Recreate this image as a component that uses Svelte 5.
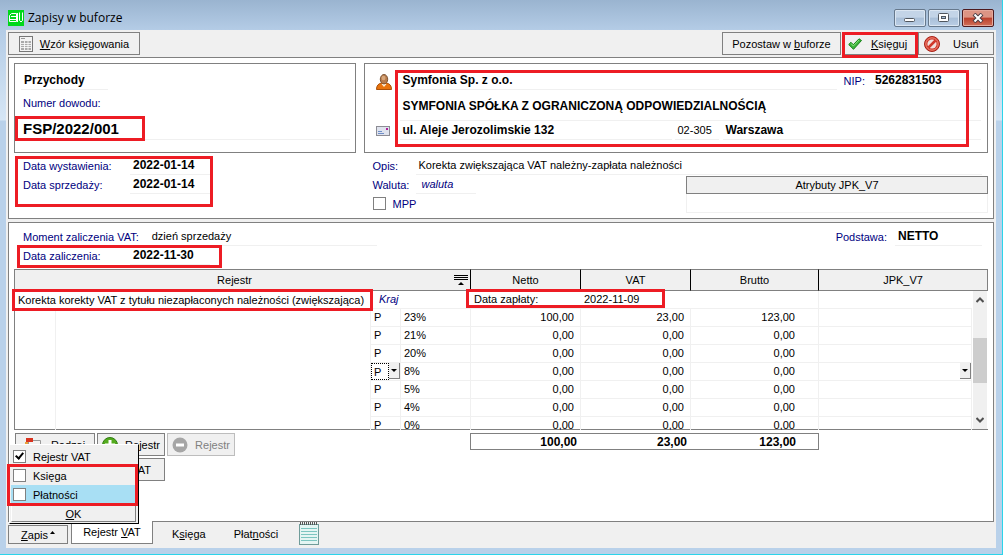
<script lang="ts">
    let menuItems = $state([
        { label: 'Rejestr VAT', checked: true, active: false },
        { label: 'Księga', checked: false, active: false },
        { label: 'Płatności', checked: false, active: true }
    ]);

    let mpp = $state(false);

    const rates = [
        { rate: '23%', netto: '100,00', vat: '23,00', brutto: '123,00' },
        { rate: '21%', netto: '0,00', vat: '0,00', brutto: '0,00' },
        { rate: '20%', netto: '0,00', vat: '0,00', brutto: '0,00' },
        { rate: '8%', netto: '0,00', vat: '0,00', brutto: '0,00', selected: true },
        { rate: '5%', netto: '0,00', vat: '0,00', brutto: '0,00' },
        { rate: '4%', netto: '0,00', vat: '0,00', brutto: '0,00' },
        { rate: '0%', netto: '0,00', vat: '0,00', brutto: '0,00' }
    ];
</script>

<svelte:head>
    <title>Zapisy w buforze</title>
</svelte:head>

<div class="window">
    <header class="titlebar">
        <svg class="logo" width="16" height="16" viewBox="0 0 16 16">
            <rect width="16" height="16" fill="#00d81a" />
            <path d="M3.500 3.500h5v8h-7v-6zM3 6.500h5M1.500 9.500h6.500M11.500 2.500v8l1.500 1.500 1.500-1.500v-8M9.500 3v9" fill="none" stroke="#fff" />
        </svg>
        <h1>Zapisy w buforze</h1>
        <div class="controls">
            <button class="control" aria-label="Minimalizuj">
                <svg width="12" height="10" viewBox="0 0 12 10"><rect x="0.500" y="5.500" width="10" height="3" rx="1" fill="#fff" stroke="#50565e" /></svg>
            </button>
            <button class="control" aria-label="Maksymalizuj">
                <svg width="12" height="10" viewBox="0 0 12 10">
                    <rect x="0.500" y="0.500" width="10" height="8" rx="1" fill="#fff" stroke="#50565e" />
                    <rect x="3.500" y="3.500" width="4" height="2" fill="#a9c0d9" stroke="#50565e" />
                </svg>
            </button>
            <button class="control close" aria-label="Zamknij">
                <svg width="12" height="10" viewBox="0 0 12 10">
                    <path d="M2 1l8 8M10 1l-8 8" stroke="#4b3d45" stroke-width="4" />
                    <path d="M2.500 1.500l7 7M9.500 1.500l-7 7" stroke="#fff" stroke-width="2" />
                </svg>
            </button>
        </div>
    </header>

    <main class="client">
        <div class="toolbar">
            <button class="btn pattern">
                <svg width="14" height="16" viewBox="0 0 14 16">
                    <rect x="0.500" y="0.500" width="13" height="15" fill="#f4f4f4" stroke="#777" />
                    <path d="M2 2.500h4" stroke="#999" />
                    <path d="M2 5h10v9H2z" fill="#aaa" />
                    <path d="M2 7.500h10M2 9.500h10M2 11.500h10M5.500 5v9M9 5v9" stroke="#fff" stroke-width="0.800" />
                </svg>
                <span><u>W</u>zór księgowania</span>
            </button>
            <div class="right-buttons">
                <button class="btn leave"><span>Pozostaw w <u>b</u>uforze</span></button>
                <button class="btn post marked">
                    <svg width="14" height="12" viewBox="0 0 14 12">
                        <path d="M0.700 6.500L3 4.300l2.300 2.400L11 0.800l2.500 1.700-8 8.800z" fill="#3cb43c" stroke="#168016" />
                        <path d="M3 5.500l2.300 2.500L11 2" fill="none" stroke="#8be27a" />
                    </svg>
                    <span><u>K</u>sięguj</span>
                    <i class="mark"></i>
                </button>
                <button class="btn remove">
                    <svg width="16" height="16" viewBox="0 0 16 16">
                        <circle cx="8" cy="8" r="7.500" fill="#d0382a" stroke="#a82218" />
                        <circle cx="8" cy="8" r="6.200" fill="none" stroke="#ef8a78" />
                        <circle cx="8" cy="8" r="4.600" fill="#f0e0dc" />
                        <path d="M4.500 11.500l7-7" stroke="#d0382a" stroke-width="2.500" />
                    </svg>
                    <span>Usuń</span>
                </button>
            </div>
        </div>

        <section class="panel document">
            <div class="boxes">
                <div class="box number">
                    <div class="value strong kind">Przychody</div>
                    <div class="label">Numer dowodu:</div>
                    <div class="value doc-number marked">FSP/2022/001<i class="mark"></i></div>
                </div>
                <div class="box company marked">
                    <svg class="icon" width="16" height="16" viewBox="0 0 16 16">
                        <path d="M0.500 15.500c0-4 2-6 5-6.500h5c3 .5 5 2.500 5 6.500z" fill="#e8730c" stroke="#a9500a" />
                        <path d="M5.500 10L8 13l2.500-3z" fill="#fff0d8" />
                        <ellipse cx="8" cy="5.200" rx="3.700" ry="4.700" fill="#b87c4c" stroke="#7c5434" />
                        <ellipse cx="7.500" cy="4" rx="2" ry="2.200" fill="#d7a77c" />
                    </svg>
                    <div class="line">
                        <div class="value strong grow">Symfonia Sp. z o.o.</div>
                        <div class="label nip">NIP:</div>
                        <div class="value strong tax-id">5262831503</div>
                    </div>
                    <div class="value strong full-name">SYMFONIA SPÓŁKA Z OGRANICZONĄ ODPOWIEDZIALNOŚCIĄ</div>
                    <svg class="icon mail" width="14" height="10" viewBox="0 0 14 10">
                        <rect x="0.500" y="0.500" width="13" height="9" fill="#dfe3ee" stroke="#8c8c94" />
                        <path d="M2 5.500h4M2 7.500h6" stroke="#6f8fc8" />
                        <rect x="10" y="2" width="2" height="2" fill="#b0209a" />
                    </svg>
                    <div class="line">
                        <div class="value strong street">ul. Aleje Jerozolimskie 132</div>
                        <div class="value zip">02-305</div>
                        <div class="value strong grow">Warszawa</div>
                    </div>
                    <i class="mark"></i>
                </div>
            </div>

            <div class="details">
                <div class="dates marked">
                    <span class="label">Data wystawienia:</span>
                    <span class="value strong">2022-01-14</span>
                    <span class="label">Data sprzedaży:</span>
                    <span class="value strong">2022-01-14</span>
                    <i class="mark"></i>
                </div>
                <div class="extra">
                    <div class="line">
                        <span class="label caption">Opis:</span>
                        <span class="value grow">Korekta zwiększająca VAT należny-zapłata należności</span>
                    </div>
                    <div class="currency-row">
                        <div class="currency">
                            <div class="line">
                                <span class="label caption">Waluta:</span>
                                <span class="value code">waluta</span>
                            </div>
                            <label class="check label">
                                <input type="checkbox" bind:checked={mpp} />
                                MPP
                            </label>
                        </div>
                        <div class="attributes">
                            <button class="btn">Atrybuty JPK_V7</button>
                            <div class="attribute-list"></div>
                        </div>
                    </div>
                </div>
            </div>
        </section>

        <section class="panel register">
            <div class="line vat-moment">
                <span class="label">Moment zaliczenia VAT:</span>
                <span class="value moment">dzień sprzedaży</span>
                <span class="label base">Podstawa:</span>
                <span class="value strong netto">NETTO</span>
            </div>
            <div class="dates posting marked">
                <span class="label">Data zaliczenia:</span>
                <span class="value strong">2022-11-30</span>
                <i class="mark"></i>
            </div>

            <div class="grid">
                <table>
                    <colgroup>
                        <col class="c-tree" /><col /><col class="c-kind" /><col class="c-rate" />
                        <col class="c-amount" /><col class="c-amount" /><col class="c-brutto" />
                        <col class="c-jpk" /><col class="c-scroll" />
                    </colgroup>
                    <thead>
                        <tr>
                            <th colspan="4">
                                <div class="th-main">
                                    <span>Rejestr</span>
                                    <svg width="14" height="10" viewBox="0 0 14 10">
                                        <path d="M0 0.500h14M0 2.500h14M0 4.500h14" stroke="#000" />
                                        <path d="M4 10l3-3 3 3z" />
                                    </svg>
                                </div>
                            </th>
                            <th>Netto</th>
                            <th>VAT</th>
                            <th>Brutto</th>
                            <th colspan="2">JPK_V7</th>
                        </tr>
                    </thead>
                    <tbody>
                        <tr class="group">
                            <td colspan="2" class="marked name">Korekta korekty VAT z tytułu niezapłaconych należności (zwiększająca)<i class="mark"></i></td>
                            <td colspan="2" class="country">Kraj</td>
                            <td class="marked paid">Data zapłaty:<i class="mark"></i></td>
                            <td>2022-11-09</td>
                            <td class="lined"></td>
                            <td></td>
                            <td rowspan="8" class="scroll">
                                <div class="scrollbar">
                                    <svg width="8" height="6" viewBox="0 0 8 6"><path d="M0.500 5L4 1.500 7.500 5" fill="none" stroke="#505050" stroke-width="2" /></svg>
                                    <div class="thumb"></div>
                                    <svg width="8" height="6" viewBox="0 0 8 6"><path d="M0.500 1L4 4.500 7.500 1" fill="none" stroke="#505050" stroke-width="2" /></svg>
                                </div>
                            </td>
                        </tr>
                        {#each rates as row}
                            <tr>
                                <td class="tree"></td>
                                <td class="blank"></td>
                                <td class="kind-cell">
                                    {#if row.selected}
                                        <div class="pick focused">
                                            <select aria-label="Rodzaj stawki"><option>P</option></select>
                                            <span class="arrow"></span>
                                        </div>
                                    {:else}
                                        P
                                    {/if}
                                </td>
                                <td>{row.rate}</td>
                                <td class="num">{row.netto}</td>
                                <td class="num">{row.vat}</td>
                                <td class="num wide">{row.brutto}</td>
                                <td class="jpk">
                                    {#if row.selected}
                                        <div class="pick">
                                            <select aria-label="JPK_V7"><option></option></select>
                                            <span class="arrow"></span>
                                        </div>
                                    {/if}
                                </td>
                            </tr>
                        {/each}
                    </tbody>
                </table>
            </div>

            <div class="below-grid">
                <div class="actions">
                    <button class="btn kind-btn">
                        <svg width="16" height="16" viewBox="0 0 16 16">
                            <path d="M3.500 3.500h12v11h-12z" fill="#f3f3f3" stroke="#999" />
                            <path d="M1 1h7v4H1z" fill="#d9331f" />
                            <path d="M0 5h3v10H0z" fill="#e8a33d" />
                            <path d="M6 7.500h7M6 10.500h7" stroke="#6aa" />
                        </svg>
                        <span>Rodzaj</span>
                    </button>
                    <button class="btn">
                        <svg width="16" height="16" viewBox="0 0 16 16">
                            <circle cx="8" cy="8" r="7.500" fill="#54ab1e" stroke="#2f7d12" />
                            <path d="M8 3v10M3 8h10" stroke="#fff" stroke-width="3" />
                        </svg>
                        <span>Rejestr</span>
                    </button>
                    <button class="btn" disabled>
                        <svg width="16" height="16" viewBox="0 0 16 16">
                            <circle cx="8" cy="8" r="7.500" fill="#a6a6a6" />
                            <path d="M4 8h8" stroke="#fff" stroke-width="3" />
                        </svg>
                        <span>Rejestr</span>
                    </button>
                    <button class="btn vat-btn">VAT</button>
                </div>
                <div class="totals">
                    <span>100,00</span>
                    <span>23,00</span>
                    <span class="wide">123,00</span>
                </div>
            </div>
        </section>

        <footer class="tabs">
            <div class="menu-anchor">
                <button class="btn save"><span><u>Z</u>apis</span><svg width="5" height="3" viewBox="0 0 5 3"><path d="M0 3l2.500-3L5 3z" /></svg></button>
                <div class="menu">
                    {#each menuItems as item}
                        <label class="check" class:active={item.active}>
                            <input type="checkbox" bind:checked={item.checked} />
                            {item.label}
                        </label>
                    {/each}
                    <button class="ok"><u>O</u>K</button>
                    <i class="mark"></i>
                </div>
            </div>
            <button class="tab current"><span>Rejestr <u>V</u>AT</span></button>
            <button class="tab"><span>K<u>s</u>ięga</span></button>
            <button class="tab"><span>Płat<u>n</u>ości</span></button>
            <button class="tab note" aria-label="Notatka">
                <svg width="20" height="23" viewBox="0 0 20 23">
                    <rect x="0.500" y="2.500" width="19" height="20" fill="#e4f5f3" stroke="#6f9c9a" />
                    <path d="M2 6.500h16M2 9.500h16M2 12.500h16M2 15.500h16M2 18.500h16" stroke="#7cc5c0" />
                    <path d="M1 1.500h18" stroke="#555" stroke-width="3" stroke-dasharray="1 1" />
                </svg>
            </button>
        </footer>
    </main>
</div>

<style>
    :global(body) {
        margin: 0;
        font-family: 'Liberation Sans', Arial, sans-serif;
        font-size: 11px;
        line-height: 14px;
        color: #000;
    }

    .window {
        box-sizing: border-box;
        min-height: 100vh;
        display: flex;
        flex-direction: column;
        padding: 0 6px 6px;
        border-right: 1px solid #2bd4ea;
        border-bottom: 1px solid #2bd4ea;
        background: linear-gradient(#9ab4d0, #b4cce6 30px, #d6e6f5 120px, #b9d1ea 121px);
    }

    button,
    select {
        font: inherit;
        color: inherit;
        padding: 0;
        margin: 0;
    }

    svg {
        flex: none;
    }

    /* title bar */
    .titlebar {
        height: 30px;
        display: flex;
        align-items: center;
        box-sizing: border-box;
        padding: 6px 2px 0;
    }

    h1 {
        margin: 0 auto 0 4px;
        font: 12px/18px 'Open Sans', sans-serif;
    }

    .controls {
        display: flex;
        gap: 2px;
    }

    .control {
        display: flex;
        align-items: center;
        justify-content: center;
        width: 32px;
        height: 18px;
        border: 1px solid #66788c;
        border-radius: 2px;
        box-shadow: inset 0 0 0 1px #dbe6f2;
        background: linear-gradient(#c3d4e7 45%, #a9bfd8 50%, #bacee5);
    }

    .close {
        border-color: #4d1a1e;
        box-shadow: inset 0 0 0 1px #e5a99c;
        background: linear-gradient(#dc9484 45%, #bb3f2b 50%, #d0705a);
    }

    /* shared controls */
    .client {
        flex: 1;
        display: flex;
        flex-direction: column;
        padding: 2px 2px 3px;
        background: #f0f0f0;
    }

    .btn {
        display: flex;
        align-items: center;
        justify-content: center;
        gap: 7px;
        box-sizing: border-box;
        height: 23px;
        border: 1px solid #808080;
        background: #f0f0f0;
    }

    .btn:disabled {
        color: #808080;
        border-color: #bdbdbd;
    }

    .marked {
        position: relative;
    }

    .mark {
        position: absolute;
        z-index: 2;
        border: 3px solid #ed1c24;
        pointer-events: none;
    }

    .label {
        color: #000080;
    }

    .value {
        box-sizing: border-box;
        padding: 0 3px;
        height: 19px;
        line-height: 18px;
        border-bottom: 1px solid #f0f0f0;
        white-space: nowrap;
    }

    .strong {
        font-size: 12px;
        font-weight: bold;
    }

    .line {
        display: flex;
        align-items: center;
    }

    .grow {
        flex: 1;
    }

    .toolbar {
        display: flex;
        justify-content: space-between;
    }

    .pattern {
        width: 132px;
    }

    .right-buttons {
        display: flex;
        gap: 1px;
    }

    .leave {
        width: 119px;
    }

    .post,
    .remove {
        justify-content: flex-start;
        padding-left: 5px;
    }

    .post {
        width: 75px;
        gap: 9px;
    }

    .post .mark {
        inset: -1px -2px -4px -1px;
    }

    .remove {
        width: 76px;
        gap: 13px;
    }

    /* document */
    .panel {
        border: 1px solid #808080;
        background: #fff;
        padding: 5px;
    }

    .document {
        margin: 2px 0 3px;
    }

    .boxes {
        display: grid;
        grid-template-columns: 35fr 64fr;
        gap: 8px;
    }

    .box {
        box-sizing: border-box;
        height: 90px;
        border: 1px solid #808080;
    }

    .number {
        padding: 7px 5px 0 6px;
    }

    .number .label {
        padding: 6px 2px 8px;
    }

    .kind {
        width: 87px;
    }

    .doc-number {
        height: 22px;
        padding: 0 2px;
        font-size: 15px;
        font-weight: bold;
        line-height: 22px;
    }

    .doc-number .mark {
        inset: -2px auto -2px -6px;
        width: 124px;
    }

    .company {
        display: grid;
        grid-template-columns: 16px 1fr;
        grid-template-rows: 19px 31px 19px;
        column-gap: 8px;
        padding: 7px 6px 0 11px;
    }

    .company .mark {
        inset: 6px 18px 5px 30px;
    }

    .icon {
        align-self: end;
    }

    .mail {
        align-self: center;
    }

    .full-name {
        grid-column: 2;
        height: 31px;
        line-height: 32px;
    }

    .nip {
        padding: 0 7px;
    }

    .tax-id {
        width: 109px;
    }

    .street {
        width: 272px;
        margin-right: 3px;
    }

    .zip {
        width: 44px;
        margin-right: 4px;
    }

    .details {
        display: grid;
        grid-template-columns: 35fr 64fr;
        gap: 8px;
        padding-top: 3px;
    }

    .dates {
        display: grid;
        grid-template-columns: 107px 80px;
        grid-auto-rows: 19px;
        align-items: center;
        align-content: start;
        padding-left: 9px;
    }

    .document .dates .mark {
        inset: 0 auto 6px 1px;
        width: 192px;
    }

    .extra {
        padding-left: 9px;
    }

    .caption {
        width: 43px;
    }

    .extra > .line {
        padding-right: 6px;
    }

    .currency-row {
        display: flex;
        justify-content: space-between;
    }

    .code {
        width: 60px;
        padding-left: 6px;
        font-style: italic;
        color: #000080;
    }

    .check {
        display: flex;
        align-items: center;
        gap: 7px;
        height: 19px;
    }

    .check input {
        appearance: none;
        box-sizing: border-box;
        width: 13px;
        height: 13px;
        margin: 0;
        border: 1px solid #808080;
        background: #fff;
    }

    .check input:checked::before {
        content: '';
        display: block;
        box-sizing: border-box;
        width: 5px;
        height: 8px;
        margin: 0 3px;
        border: solid #000;
        border-width: 0 2px 2px 0;
        transform: rotate(40deg);
    }

    .attributes {
        width: 302px;
        padding-top: 1px;
    }

    .attributes .btn {
        width: 100%;
        height: 18px;
    }

    .attribute-list {
        height: 18px;
        border: 1px solid #f0f0f0;
        border-top: 0;
    }

    /* VAT register */
    .register {
        flex: 1;
        padding-top: 4px;
    }

    .vat-moment,
    .posting {
        padding-left: 9px;
    }

    .vat-moment {
        padding-right: 6px;
    }

    .moment {
        width: 228px;
        margin: 0 auto 0 10px;
    }

    .base {
        padding-right: 8px;
    }

    .netto {
        width: 87px;
    }

    .posting .mark {
        inset: -1px auto -3px 3px;
        width: 199px;
    }

    /* clip the scrolled rows but leave room for the frame on the left */
    .grid {
        box-sizing: border-box;
        height: 161px;
        margin-top: 4px;
        border-bottom: 1px solid #808080;
        border-left: 1px solid #808080;
        clip-path: inset(0 0 0 -3px);
    }

    table {
        width: 100%;
        table-layout: fixed;
        border-collapse: separate;
        border-spacing: 0;
    }

    .c-tree { width: 41px; }
    .c-kind { width: 30px; }
    .c-rate { width: 70px; }
    .c-amount { width: 110px; }
    .c-brutto { width: 128px; }
    .c-jpk { width: 153px; }
    .c-scroll { width: 16px; }

    th {
        box-sizing: border-box;
        height: 22px;
        padding: 0;
        border: 1px solid #808080;
        border-width: 1px 0;
        border-right: 1px solid #000;
        background: #f0f0f0;
        font-weight: normal;
    }

    th:last-child {
        border-right-color: #808080;
    }

    .th-main {
        display: flex;
        align-items: center;
        padding-right: 2px;
    }

    .th-main span {
        flex: 1;
    }

    td {
        box-sizing: border-box;
        height: 18px;
        padding: 0 3px;
        border: 0 solid #f0f0f0;
        border-width: 0 1px 1px 0;
        line-height: 17px;
        white-space: nowrap;
    }

    .group td {
        border-right-width: 0;
    }

    .group .lined {
        border-right-width: 1px;
    }

    .group .name,
    td.blank,
    td.tree {
        border-bottom-width: 0;
    }

    .name .mark {
        inset: -2px -2px -2px -3px;
    }

    .paid .mark {
        inset: -2px -84px 0 -5px;
    }

    td.country {
        padding-left: 8px;
        font-style: italic;
        color: #000080;
    }

    .num {
        padding-right: 6px;
        text-align: right;
    }

    .num.wide {
        padding-right: 23px;
    }

    td.scroll {
        padding: 0;
        border: 0;
        vertical-align: top;
    }

    .scrollbar {
        box-sizing: border-box;
        display: flex;
        flex-direction: column;
        align-items: center;
        justify-content: space-between;
        height: 138px;
        margin: 0 1px;
        padding: 6px 0;
        background: #f0f0f0;
    }

    .thumb {
        align-self: stretch;
        height: 45px;
        background: #cdcdcd;
    }

    td.kind-cell {
        overflow: hidden;
    }

    .pick {
        display: flex;
        position: relative;
        height: 17px;
        margin: 0 -3px;
    }

    .pick select {
        box-sizing: border-box;
        appearance: none;
        flex: 1;
        min-width: 0;
        height: 17px;
        padding-left: 3px;
        border: 0;
        background: #fff;
        line-height: 14px;
    }

    .focused select {
        padding-left: 2px;
        border: 1px dotted #000;
    }

    .arrow {
        display: flex;
        align-items: center;
        justify-content: center;
        box-sizing: border-box;
        width: 11px;
        height: 16px;
        border: 1px solid #808080;
        border-width: 0 1px 1px 0;
        background: #f0f0f0;
        pointer-events: none;
    }

    .arrow::before {
        content: '';
        border: solid transparent;
        border-width: 3px 3px 0;
        border-top-color: #000;
    }

    .below-grid {
        display: flex;
        justify-content: space-between;
        align-items: flex-start;
        margin: 3px 169px 0 1px;
    }

    .actions {
        display: grid;
        grid-template-columns: 80px 68px 68px;
        gap: 2px;
    }

    .kind-btn {
        gap: 10px;
    }

    .vat-btn {
        grid-column: span 2;
        justify-content: flex-end;
        padding-right: 13px;
    }

    .totals {
        box-sizing: border-box;
        display: grid;
        grid-template-columns: 109px 110px 128px;
        height: 17px;
        border: 1px solid #808080;
        font-size: 12px;
        font-weight: bold;
        line-height: 16px;
        text-align: right;
    }

    .totals span {
        padding-right: 3px;
    }

    .totals .wide {
        padding-right: 22px;
    }

    /* bottom bar */
    .tabs {
        display: flex;
        align-items: flex-start;
        height: 23px;
    }

    .menu-anchor {
        position: relative;
        margin: 3px 3px 0 0;
    }

    .save {
        width: 60px;
        height: 19px;
        gap: 2px;
    }

    .save svg {
        align-self: flex-start;
        margin-top: 5px;
    }

    .tab {
        box-sizing: border-box;
        height: 23px;
        padding: 0 14px;
        border: 0;
        background: none;
    }

    .tab.current {
        width: 82px;
        margin: -1px 5px 0 0;
        padding: 0;
        border: 1px solid #808080;
        border-top: 0;
        background: #fff;
    }

    .note {
        padding: 0 7px;
    }

    .menu {
        position: absolute;
        z-index: 3;
        left: 1px;
        bottom: 20px;
        box-sizing: border-box;
        width: 130px;
        padding: 2px 2px 1px 1px;
        border: 1px solid #fff;
        border-right-color: #000;
        border-bottom-color: #000;
        background: #f0f0f0;
    }

    .menu .check {
        padding-left: 2px;
    }

    .menu .active {
        background: #a8dff4;
    }

    .ok {
        display: block;
        width: 100%;
        height: 17px;
        margin-top: 1px;
        border: 1px solid #fff;
        border-right-color: #808080;
        border-bottom-color: #808080;
        background: #f0f0f0;
        line-height: 14px;
    }

    .menu .mark {
        inset: 19px 0 17px -3px;
    }
</style>
